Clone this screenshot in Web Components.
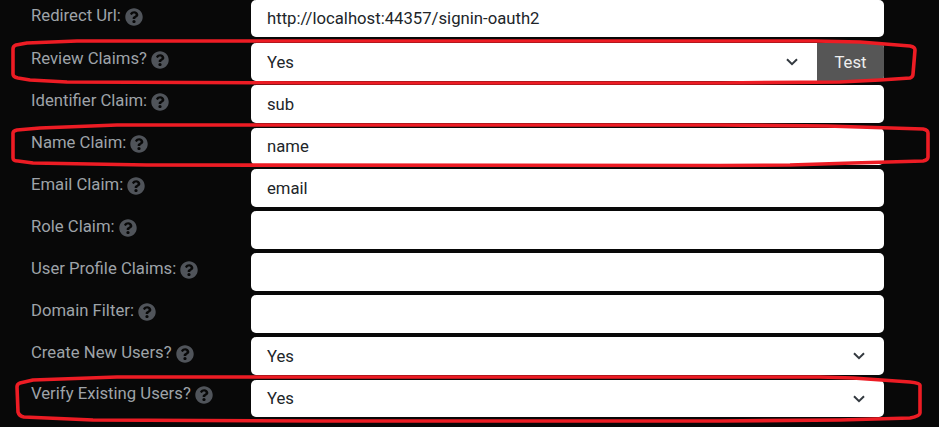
<!DOCTYPE html>
<html><head><meta charset="utf-8"><style>
html,body{margin:0;padding:0;background:#080808;overflow:hidden}
body{width:939px;height:427px;position:relative;font-family:Roboto,sans-serif}
settings-form{padding-left:31px;width:853px}
</style></head><body>
<settings-form>
<form-row label="Redirect Url:" value="http://localhost:44357/signin-oauth2" style="--h:37px"></form-row>
<form-row label="Review Claims?" value="Yes" select test style="--mt:2px"></form-row>
<form-row label="Identifier Claim:" value="sub"></form-row>
<form-row label="Name Claim:" value="name" style="--h:37px;--mt:1px;--pt:6px"></form-row>
<form-row label="Email Claim:" value="email"></form-row>
<form-row label="Role Claim:" value=""></form-row>
<form-row label="User Profile Claims:" value=""></form-row>
<form-row label="Domain Filter:" value=""></form-row>
<form-row label="Create New Users?" value="Yes" select></form-row>
<form-row label="Verify Existing Users?" value="Yes" select style="--h:37px;--mt:1px;--pt:5px"></form-row>
</settings-form>
<red-marks></red-marks>
<script>
const HELP='M504 256c0 136.997-111.043 248-248 248S8 392.997 8 256C8 119.083 119.043 8 256 8s248 111.083 248 248zM262.655 90c-54.497 0-89.255 22.957-116.549 63.758-3.536 5.286-2.353 12.415 2.715 16.258l34.699 26.31c5.205 3.947 12.621 3.008 16.665-2.122 17.864-22.658 30.113-35.797 57.303-35.797 20.429 0 45.698 13.148 45.698 32.958 0 14.976-12.363 22.667-32.534 33.976C247.128 238.528 216 254.941 216 296v4c0 6.627 5.373 12 12 12h56c6.627 0 12-5.373 12-12v-1.333c0-28.462 83.186-29.647 83.186-106.667 0-58.002-60.165-102-116.531-102zM256 338c-25.365 0-46 20.635-46 46 0 25.364 20.635 46 46 46s46-20.636 46-46c0-25.365-20.635-46-46-46z';
class SettingsForm extends HTMLElement{constructor(){super();this.attachShadow({mode:'open'}).innerHTML=`<style>:host{display:flex;flex-direction:column;gap:4px;box-sizing:content-box}</style><slot></slot>`}}
class FormRow extends HTMLElement{constructor(){super();this.attachShadow({mode:'open'})}
connectedCallback(){const sel=this.hasAttribute('select'),t=this.hasAttribute('test');
this.shadowRoot.innerHTML=`<style>
:host{display:grid;grid-template-columns:220px 633px;height:var(--h,38px);margin-top:var(--mt,0)}
.l{display:flex;align-items:flex-start;gap:4px;padding-top:var(--pt,7px);color:#9ea3a8;font-size:16.7px;line-height:18px;white-space:nowrap}
.l svg{width:18px;height:18px;margin-top:1px;fill:#50545a;flex:none}
.c{display:flex;background:#fff;border-radius:5px;overflow:hidden;min-width:0}
.v{flex:1;display:flex;align-items:center;padding-left:16px;color:#212529;font-size:16.7px}
.s{flex:none;width:32px;margin-right:9px;display:flex;align-items:center;justify-content:center}
.s svg{width:12px;height:8px;fill:none;stroke:#343a40;stroke-width:2}
.b{flex:none;width:67px;background:#565656;color:#eee;font-size:16.7px;display:flex;align-items:center;justify-content:center}
</style><div class="l"><span>${this.getAttribute('label')}</span><svg viewBox="0 0 512 512"><path fill-rule="evenodd" d="${HELP}"/></svg></div>
<div class="c"><div class="v">${this.getAttribute('value')}</div>${sel?`<div class="s"><svg viewBox="0 0 12 8"><path d="M1 1.2l5 5 5-5"/></svg></div>`:''}${t?`<div class="b">Test</div>`:''}</div>`}}
class RedMarks extends HTMLElement{constructor(){super();this.attachShadow({mode:'open'}).innerHTML=`<style>:host{position:absolute;inset:0;pointer-events:none}svg{display:block;width:939px;height:427px}path{fill:none;stroke:#ed1c24;stroke-width:3.6;stroke-linejoin:round}</style>
<svg viewBox="0 0 939 427">
<path d="M13 49L13 74Q13 77 18 78L30 80L67 82L320 83L720 83L840 82L880 80L910 78Q913 77 913 74L915 50Q915 47 910 46L860 42L815 41L320 41L77 41L27 43L16 45Q13 46 13 49Z"/>
<path d="M13 133L13 158Q13 161 18 161L33 163L147 165L720 165.5L790 165L853 163L923 161Q928 160 928 157L928 133Q928 130 923 129L827 126L720 125L320 125L117 125L40 128L17 130Q13 131 13 133Z"/>
<path d="M17 387L18 412Q19 416 24 417L93 420L320 421L720 421L840 420L910 418Q920 416 920 413L920 385Q920 383 910 382L853 378L820 377L320 377L117 377L33 380L20 383Q17 384 17 387Z"/>
</svg>`}}
customElements.define('settings-form',SettingsForm);customElements.define('form-row',FormRow);customElements.define('red-marks',RedMarks);
</script>
</body></html>
